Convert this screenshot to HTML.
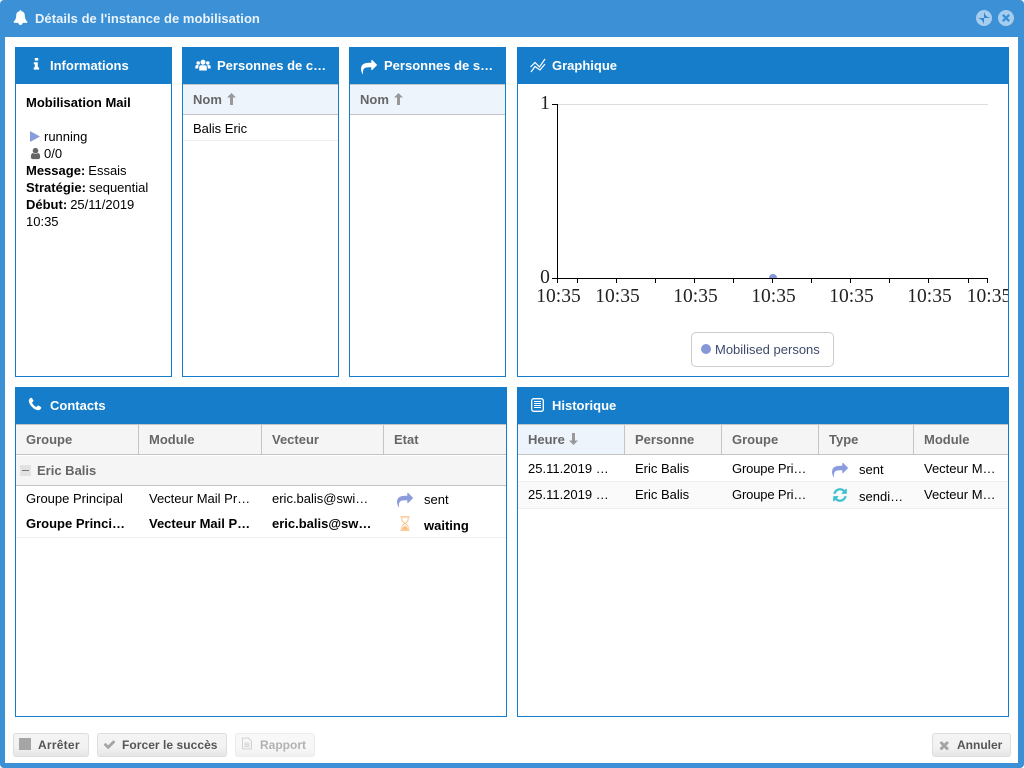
<!DOCTYPE html>
<html lang="fr"><head><meta charset="utf-8"><title>Détails de l'instance de mobilisation</title>
<style>
html,body{margin:0;padding:0;background:#fff;}
body{width:1024px;height:768px;overflow:hidden;position:relative;font:13px/17px "Liberation Sans",sans-serif;color:#000;}
#win{position:absolute;left:0;top:0;width:1024px;height:768px;background:#3b90d6;border-radius:4px;}
#inner{position:absolute;left:5px;top:37px;width:1013px;height:726px;background:#fff;}
.p{position:absolute;box-sizing:border-box;border:1px solid #167dcb;background:#fff;}
.h{position:absolute;background:#167dcb;height:37px;}
.t{position:absolute;white-space:nowrap;}
.t b{margin-right:-.6px;}
.ht{position:absolute;white-space:nowrap;color:#fff;font-weight:bold;}
.b{font-weight:bold;}
.g{color:#666;font-weight:bold;}
.r{position:absolute;}
.th{position:absolute;box-sizing:border-box;height:31px;background:#f5f5f5;border-top:1px solid #c4c4c4;border-bottom:1px solid #c4c4c4;}
svg{position:absolute;overflow:visible;}
.btn{position:absolute;box-sizing:border-box;top:733px;height:24px;border:1px solid #ddd;border-radius:3px;background:linear-gradient(#f4f4f4 0,#f2f2f2 60%,#e6e6e6 100%);}
.bt{position:absolute;top:737px;font-size:12px;font-weight:bold;color:#555;white-space:nowrap;}
</style></head><body>
<div id="win"></div>
<div id="inner"></div>

<svg style="left:12.500px;top:10px" width="15" height="15" viewBox="0 0 1792 1792"><path fill="#fff" d="M1728 1408q0 52-38 90t-90 38h-448q0 106-75 181t-181 75-181-75-75-181h-448q-52 0-90-38t-38-90q50-42 91-88t85-119.500 74.500-158.500 50-206 19.500-260q0-152 117-282.500t307-158.500q-8-19-8-39 0-40 28-68t68-28 68 28 28 68q0 20-8 39 190 28 307 158.500t117 282.500q0 139 19.500 260t50 206 74.500 158.500 85 119.500 91 88z"/></svg>
<span class="ht" style="left:35px;top:10px;color:#eaf3fb;letter-spacing:.04px">Détails de l'instance de mobilisation</span>

<svg style="left:976px;top:10px" width="16" height="16" viewBox="0 0 16 16"><circle cx="8" cy="8" r="8" fill="#a6cdee"/><path d="M8 1.500Q9 7 14.500 8H8z" fill="#2f86cf"/><path d="M8 14.500Q7 9 1.500 8H8z" fill="#2f86cf"/></svg>
<svg style="left:998px;top:10px" width="16" height="16" viewBox="0 0 16 16"><circle cx="8" cy="8" r="8" fill="#a6cdee"/><path d="M4.800 4.800 11.200 11.200M11.200 4.800 4.800 11.200" stroke="#3b90d6" stroke-width="2.400"/></svg>

<!-- Informations -->
<div class="p" style="left:15px;top:47px;width:157px;height:330px"></div>
<div class="h" style="left:15px;top:47px;width:157px"></div>
<svg style="left:32.500px;top:58px" width="7" height="12" viewBox="0 0 8 14"><path fill="#fff" d="M2 0h4v3H2zM.800 5H5.500v6H7v2.500H.800V11H2V7.300H.800z"/></svg>
<span class="ht" style="left:50px;top:57px">Informations</span>
<span class="t b" style="left:26px;top:94px">Mobilisation Mail</span>
<svg style="left:30px;top:131px" width="10" height="11"><path d="M0 0 10 5.500 0 11z" fill="#8b9cdc"/></svg>
<span class="t" style="left:44px;top:128px">running</span>
<svg style="left:29px;top:147px" width="13" height="13" viewBox="0 0 1792 1792"><path fill="#666" d="M1536 1399q0 109-62.500 187t-150.500 78h-854q-88 0-150.500-78t-62.500-187q0-85 8.500-160.500t31.500-152 58.500-131 94-89 134.500-34.500q131 128 313 128t313-128q76 0 134.500 34.500t94 89 58.500 131 31.500 152 8.500 160.500zm-256-887q0 159-112.500 271.500t-271.500 112.500-271.500-112.500-112.500-271.500 112.500-271.500 271.500-112.500 271.500 112.500 112.500 271.500z"/></svg>
<span class="t" style="left:44px;top:145px">0/0</span>
<span class="t" style="left:26px;top:162px"><b>Message:</b> Essais</span>
<span class="t" style="left:26px;top:179px"><b>Stratégie:</b> sequential</span>
<span class="t" style="left:26px;top:196px"><b>Début:</b> 25/11/2019</span>
<span class="t" style="left:26px;top:213px">10:35</span>

<!-- Personnes de c -->
<div class="p" style="left:182px;top:47px;width:157px;height:330px"></div>
<div class="h" style="left:182px;top:47px;width:157px"></div>
<svg style="left:195px;top:58px" width="16" height="14" viewBox="0 0 16 14"><g fill="#fff"><circle cx="8" cy="4.200" r="2.500"/><circle cx="3.200" cy="5" r="1.800"/><circle cx="12.800" cy="5" r="1.800"/><path d="M4.200 12.500V9.500Q4.200 7.300 6 7.300H10Q11.800 7.300 11.800 9.500V12.500z"/><path d="M.300 10.500V8.800Q.300 7 2 7H3.800Q3.200 8 3.200 10.500zM15.700 10.500V8.800Q15.700 7 14 7H12.200Q12.800 8 12.800 10.500z"/></g></svg>
<span class="ht" style="left:217px;top:57px">Personnes de c…</span>
<div class="th" style="left:183px;top:84px;width:155px;background:#edf4fc"></div>
<span class="t g" style="left:193px;top:91px">Nom</span>
<svg style="left:226.500px;top:93px" width="9" height="12" viewBox="0 0 9 12"><path fill="#999" d="M4.500 0 9 4.500H6V12H3V4.500H0z"/></svg>
<span class="t" style="left:193px;top:120px">Balis Eric</span>
<div class="r" style="left:183px;top:140px;width:155px;height:1px;background:#eee"></div>

<!-- Personnes de s -->
<div class="p" style="left:349px;top:47px;width:157px;height:330px"></div>
<div class="h" style="left:349px;top:47px;width:157px"></div>
<svg style="left:361px;top:57px" width="16" height="16" viewBox="0 0 1792 1792"><path fill="#fff" transform="matrix(1 0 0 -1 0 1536)" d="M1792 640q0 26-19 45l-512 512q-19 19-45 19t-45-19-19-45v-256h-224q-713 0-875-403-53-134-53-333 0-166 127-451 3-7 10.500-24t13.500-30 13-22q12-17 28-17 15 0 23.500 10t8.500 25q0 9-2.500 26.500t-2.500 23.500q-5 68-5 123 0 101 17.500 181t48.500 138.500 80 101 105.500 69.500 133 42.500 154 21.500 175.500 6h224v-256q0-26 19-45t45-19 45 19l512 512q19 19 19 45z"/></svg>
<span class="ht" style="left:384px;top:57px">Personnes de s…</span>
<div class="th" style="left:350px;top:84px;width:155px;background:#edf4fc"></div>
<span class="t g" style="left:360px;top:91px">Nom</span>
<svg style="left:393.500px;top:93px" width="9" height="12" viewBox="0 0 9 12"><path fill="#999" d="M4.500 0 9 4.500H6V12H3V4.500H0z"/></svg>

<!-- Graphique -->
<div class="p" style="left:517px;top:47px;width:492px;height:330px"></div>
<div class="h" style="left:517px;top:47px;width:492px"></div>
<svg style="left:530px;top:58px" width="16" height="15" viewBox="0 0 16 15"><g fill="none" stroke="#fff" stroke-width="1.200"><path d="M.500 9 5 4.500 9.500 9 15 1"/><path d="M1 14 5 8.500 10 12 15 6"/></g></svg>
<span class="ht" style="left:552px;top:57px">Graphique</span>
<div class="r" style="left:518px;top:84px;width:490px;height:292px;overflow:hidden">
<svg style="left:-518px;top:-84px" width="1024" height="400" viewBox="0 0 1024 400">
<path d="M557.500 104.500H988" stroke="#ddd" fill="none"/>
<path d="M769 278A4 4 0 0 1 777 278z" fill="#8597d6"/>
<path d="M557.500 104V278.500M552 104.500H557.500M552 278.500H988M557.500 278V283M577.500 278V283M616.500 278V283M655.500 278V283M694.500 278V283M733.500 278V283M772.500 278V283M811.500 278V283M850.500 278V283M889.500 278V283M928.500 278V283M968.500 278V283M987.500 278V283" stroke="#000" fill="none"/>
<g font-family="'Liberation Serif',serif" font-size="19.500" fill="#222" text-anchor="middle">
<text x="545" y="109">1</text><text x="545" y="283">0</text>
<text x="558.500" y="302">10:35</text><text x="617.500" y="302">10:35</text><text x="695.500" y="302">10:35</text><text x="773.500" y="302">10:35</text><text x="851.500" y="302">10:35</text><text x="929.500" y="302">10:35</text><text x="989" y="302">10:35</text>
</g></svg></div>
<div class="r" style="left:691px;top:332px;width:143px;height:35px;box-sizing:border-box;border:1px solid #ccc;border-radius:5px"></div>
<svg style="left:701px;top:344px" width="10" height="10"><circle cx="5" cy="5" r="5" fill="#8597d6"/></svg>
<span class="t" style="left:715px;top:341px;color:#3d4a6b">Mobilised persons</span>

<!-- Contacts -->
<div class="p" style="left:15px;top:387px;width:492px;height:330px"></div>
<div class="h" style="left:15px;top:387px;width:492px"></div>
<svg style="left:29px;top:398px" width="12" height="12" viewBox="192 128 1408 1408"><path fill="#fff" stroke="#fff" stroke-width="50" d="M1600 1240q0 27-10 70.500t-21 68.500q-21 50-122 106-94 51-186 51-27 0-53-3.500t-57.500-12.500-47-14.500-55.500-20.500-49-18q-98-35-175-83-127-79-264-216t-216-264q-48-77-83-175-3-9-18-49t-20.500-55.500-14.500-47-12.500-57.500-3.500-53q0-92 51-186 56-101 106-122 25-11 68.500-21t70.500-10q14 0 21 3 18 6 53 76 11 19 30 54t35 63.500 31 53.500q3 4 17.500 25t21.500 35.500 7 28.500q0 20-28.500 50t-62 55-62 53-28.500 46q0 9 5 22.500t8.500 20.500 14 24 11.500 19q76 137 174 235t235 174q2 1 19 11.500t24 14 20.500 8.500 22.500 5q18 0 46-28.500t53-62 55-62 50-28.500q14 0 28.500 7t35.500 21.500 25 17.500q25 15 53.500 31t63.500 35 54 30q70 35 76 53 3 7 3 21z"/></svg>
<span class="ht" style="left:50px;top:397px">Contacts</span>
<div class="th" style="left:16px;top:424px;width:490px"></div>
<div class="r" style="left:138px;top:425px;width:1px;height:29px;background:#c4c4c4"></div>
<div class="r" style="left:261px;top:425px;width:1px;height:29px;background:#c4c4c4"></div>
<div class="r" style="left:383px;top:425px;width:1px;height:29px;background:#c4c4c4"></div>
<span class="t g" style="left:26px;top:431px">Groupe</span>
<span class="t g" style="left:149px;top:431px">Module</span>
<span class="t g" style="left:272px;top:431px">Vecteur</span>
<span class="t g" style="left:394px;top:431px">Etat</span>
<div class="r" style="left:16px;top:456px;width:490px;height:29px;background:#f5f5f5;border-bottom:1px solid #c4c4c4"></div>
<div class="r" style="left:20px;top:465px;width:11px;height:11px;background:#e2e2e2"></div>
<div class="r" style="left:22px;top:470px;width:7px;height:1px;background:#777"></div>
<span class="t g" style="left:37px;top:462px">Eric Balis</span>
<span class="t" style="left:26px;top:490px">Groupe Principal</span>
<span class="t" style="left:149px;top:490px">Vecteur Mail Pr…</span>
<span class="t" style="left:272px;top:490px">eric.balis@swi…</span>
<svg style="left:397px;top:490px" width="16" height="16" viewBox="0 0 1792 1792"><path fill="#8b9cdc" transform="matrix(1 0 0 -1 0 1536)" d="M1792 640q0 26-19 45l-512 512q-19 19-45 19t-45-19-19-45v-256h-224q-713 0-875-403-53-134-53-333 0-166 127-451 3-7 10.500-24t13.500-30 13-22q12-17 28-17 15 0 23.500 10t8.500 25q0 9-2.500 26.500t-2.500 23.500q-5 68-5 123 0 101 17.500 181t48.500 138.500 80 101 105.500 69.500 133 42.500 154 21.500 175.500 6h224v-256q0-26 19-45t45-19 45 19l512 512q19 19 19 45z"/></svg>
<span class="t" style="left:424px;top:491px">sent</span>
<span class="t b" style="left:26px;top:515px">Groupe Princi…</span>
<span class="t b" style="left:149px;top:515px">Vecteur Mail P…</span>
<span class="t b" style="left:272px;top:515px">eric.balis@sw…</span>
<svg style="left:400px;top:516px" width="10" height="15" viewBox="0 0 11 16" opacity=".85"><path d="M.500.700H10.500M.500 15.300H10.500" stroke="#f7b26a" stroke-width="1.300"/><path d="M2 1.500V3.500Q2 6 5.500 8 9 6 9 3.500V1.500M2 14.500V12.500Q2 10 5.500 8 9 10 9 12.500V14.500" fill="none" stroke="#f7b26a"/><path d="M2.500 14.500Q3 11.500 5.500 10.500 8 11.500 8.500 14.500z" fill="#f7b26a"/></svg>
<span class="t b" style="left:424px;top:517px">waiting</span>
<div class="r" style="left:16px;top:537px;width:490px;height:1px;background:#eee"></div>

<!-- Historique -->
<div class="p" style="left:517px;top:387px;width:492px;height:330px"></div>
<div class="h" style="left:517px;top:387px;width:492px"></div>
<svg style="left:531px;top:398px" width="13" height="14" viewBox="0 0 13 14"><rect x=".700" y=".700" width="11.600" height="12.600" rx="2" fill="none" stroke="#fff" stroke-width="1.300"/><path d="M3 3.500H10M3 5.500H10M3 7.500H10M3 9.500H10" stroke="#fff" stroke-width=".9"/></svg>
<span class="ht" style="left:552px;top:397px">Historique</span>
<div class="th" style="left:518px;top:424px;width:490px"></div>
<div class="r" style="left:518px;top:425px;width:106px;height:29px;background:#edf4fc"></div>
<div class="r" style="left:624px;top:425px;width:1px;height:29px;background:#c4c4c4"></div>
<div class="r" style="left:721px;top:425px;width:1px;height:29px;background:#c4c4c4"></div>
<div class="r" style="left:818px;top:425px;width:1px;height:29px;background:#c4c4c4"></div>
<div class="r" style="left:913px;top:425px;width:1px;height:29px;background:#c4c4c4"></div>
<span class="t g" style="left:528px;top:431px">Heure</span>
<svg style="left:568.500px;top:433px" width="9" height="12" viewBox="0 0 9 12"><path fill="#999" d="M4.500 12 9 7.500H6V0H3V7.500H0z"/></svg>
<span class="t g" style="left:635px;top:431px">Personne</span>
<span class="t g" style="left:732px;top:431px">Groupe</span>
<span class="t g" style="left:829px;top:431px">Type</span>
<span class="t g" style="left:924px;top:431px">Module</span>
<div class="r" style="left:518px;top:481px;width:490px;height:1px;background:#eee"></div>
<div class="r" style="left:518px;top:482px;width:490px;height:26px;background:#fafafa"></div>
<div class="r" style="left:518px;top:508px;width:490px;height:1px;background:#eee"></div>
<span class="t" style="left:528px;top:460px">25.11.2019 …</span>
<span class="t" style="left:635px;top:460px">Eric Balis</span>
<span class="t" style="left:732px;top:460px;letter-spacing:-.15px">Groupe Pri…</span>
<svg style="left:832px;top:460px" width="16" height="16" viewBox="0 0 1792 1792"><path fill="#8b9cdc" transform="matrix(1 0 0 -1 0 1536)" d="M1792 640q0 26-19 45l-512 512q-19 19-45 19t-45-19-19-45v-256h-224q-713 0-875-403-53-134-53-333 0-166 127-451 3-7 10.500-24t13.500-30 13-22q12-17 28-17 15 0 23.500 10t8.500 25q0 9-2.500 26.500t-2.500 23.500q-5 68-5 123 0 101 17.500 181t48.500 138.500 80 101 105.500 69.500 133 42.500 154 21.500 175.500 6h224v-256q0-26 19-45t45-19 45 19l512 512q19 19 19 45z"/></svg>
<span class="t" style="left:859px;top:461px">sent</span>
<span class="t" style="left:924px;top:460px">Vecteur M…</span>
<span class="t" style="left:528px;top:486px">25.11.2019 …</span>
<span class="t" style="left:635px;top:486px">Eric Balis</span>
<span class="t" style="left:732px;top:486px;letter-spacing:-.15px">Groupe Pri…</span>
<svg style="left:832px;top:487px" width="16" height="16" viewBox="0 0 1792 1792"><path fill="#3fc1cf" d="M1639 1056q0 5-1 7-64 268-268 434.500t-478 166.500q-146 0-282.500-55t-243.500-157l-129 129q-19 19-45 19t-45-19-19-45v-448q0-26 19-45t45-19h448q26 0 45 19t19 45-19 45l-137 137q71 66 161 102t187 36q134 0 250-65t186-179q11-17 53-117 8-23 30-23h192q13 0 22.500 9.500t9.500 22.500zm25-800v448q0 26-19 45t-45 19h-448q-26 0-45-19t-19-45 19-45l138-138q-148-137-349-137-134 0-250 65t-186 179q-11 17-53 117-8 23-30 23h-199q-13 0-22.500-9.500t-9.500-22.500v-7q65-268 270-434.500t480-166.500q146 0 284 55.500t245 156.500l130-129q19-19 45-19t45 19 19 45z"/></svg>
<span class="t" style="left:859px;top:488px">sendi…</span>
<span class="t" style="left:924px;top:486px">Vecteur M…</span>

<!-- Buttons -->
<div class="btn" style="left:13px;width:76px"></div>
<div class="r" style="left:19px;top:738px;width:12px;height:12px;background:#a5a5a5"></div>
<span class="bt" style="left:38px;letter-spacing:.25px">Arrêter</span>
<div class="btn" style="left:97px;width:130px"></div>
<svg style="left:103px;top:738px" width="13" height="13" viewBox="0 0 1792 1792"><path fill="#a5a5a5" d="M1671 566q0 40-28 68l-724 724-136 136q-28 28-68 28t-68-28l-136-136-362-362q-28-28-28-68t28-68l136-136q28-28 68-28t68 28l294 295 656-657q28-28 68-28t68 28l136 136q28 28 28 68z"/></svg>
<span class="bt" style="left:122px;letter-spacing:.05px">Forcer le succès</span>
<div class="btn" style="left:235px;width:80px;opacity:.55"></div>
<svg style="left:242px;top:737px" width="10" height="13" viewBox="0 0 11 13"><path d="M.500.500H7L10.500 4V12.500H.500z" fill="none" stroke="#ccc"/><path d="M2.500 6H8.500M2.500 8H8.500M2.500 10H8.500" stroke="#ccc"/></svg>
<span class="bt" style="left:260px;color:#b2b2b2">Rapport</span>
<div class="btn" style="left:932px;width:79px"></div>
<svg style="left:938.500px;top:739.500px" width="10.500" height="10.500" viewBox="200 200 1400 1400"><path fill="#a5a5a5" d="M1490 1322q0 40-28 68l-136 136q-28 28-68 28t-68-28l-294-294-294 294q-28 28-68 28t-68-28l-136-136q-28-28-28-68t28-68l294-294-294-294q-28-28-28-68t28-68l136-136q28-28 68-28t68 28l294 294 294-294q28-28 68-28t68 28l136 136q28 28 28 68t-28 68l-294 294 294 294q28 28 28 68z"/></svg>
<span class="bt" style="left:957px">Annuler</span>
</body></html>
